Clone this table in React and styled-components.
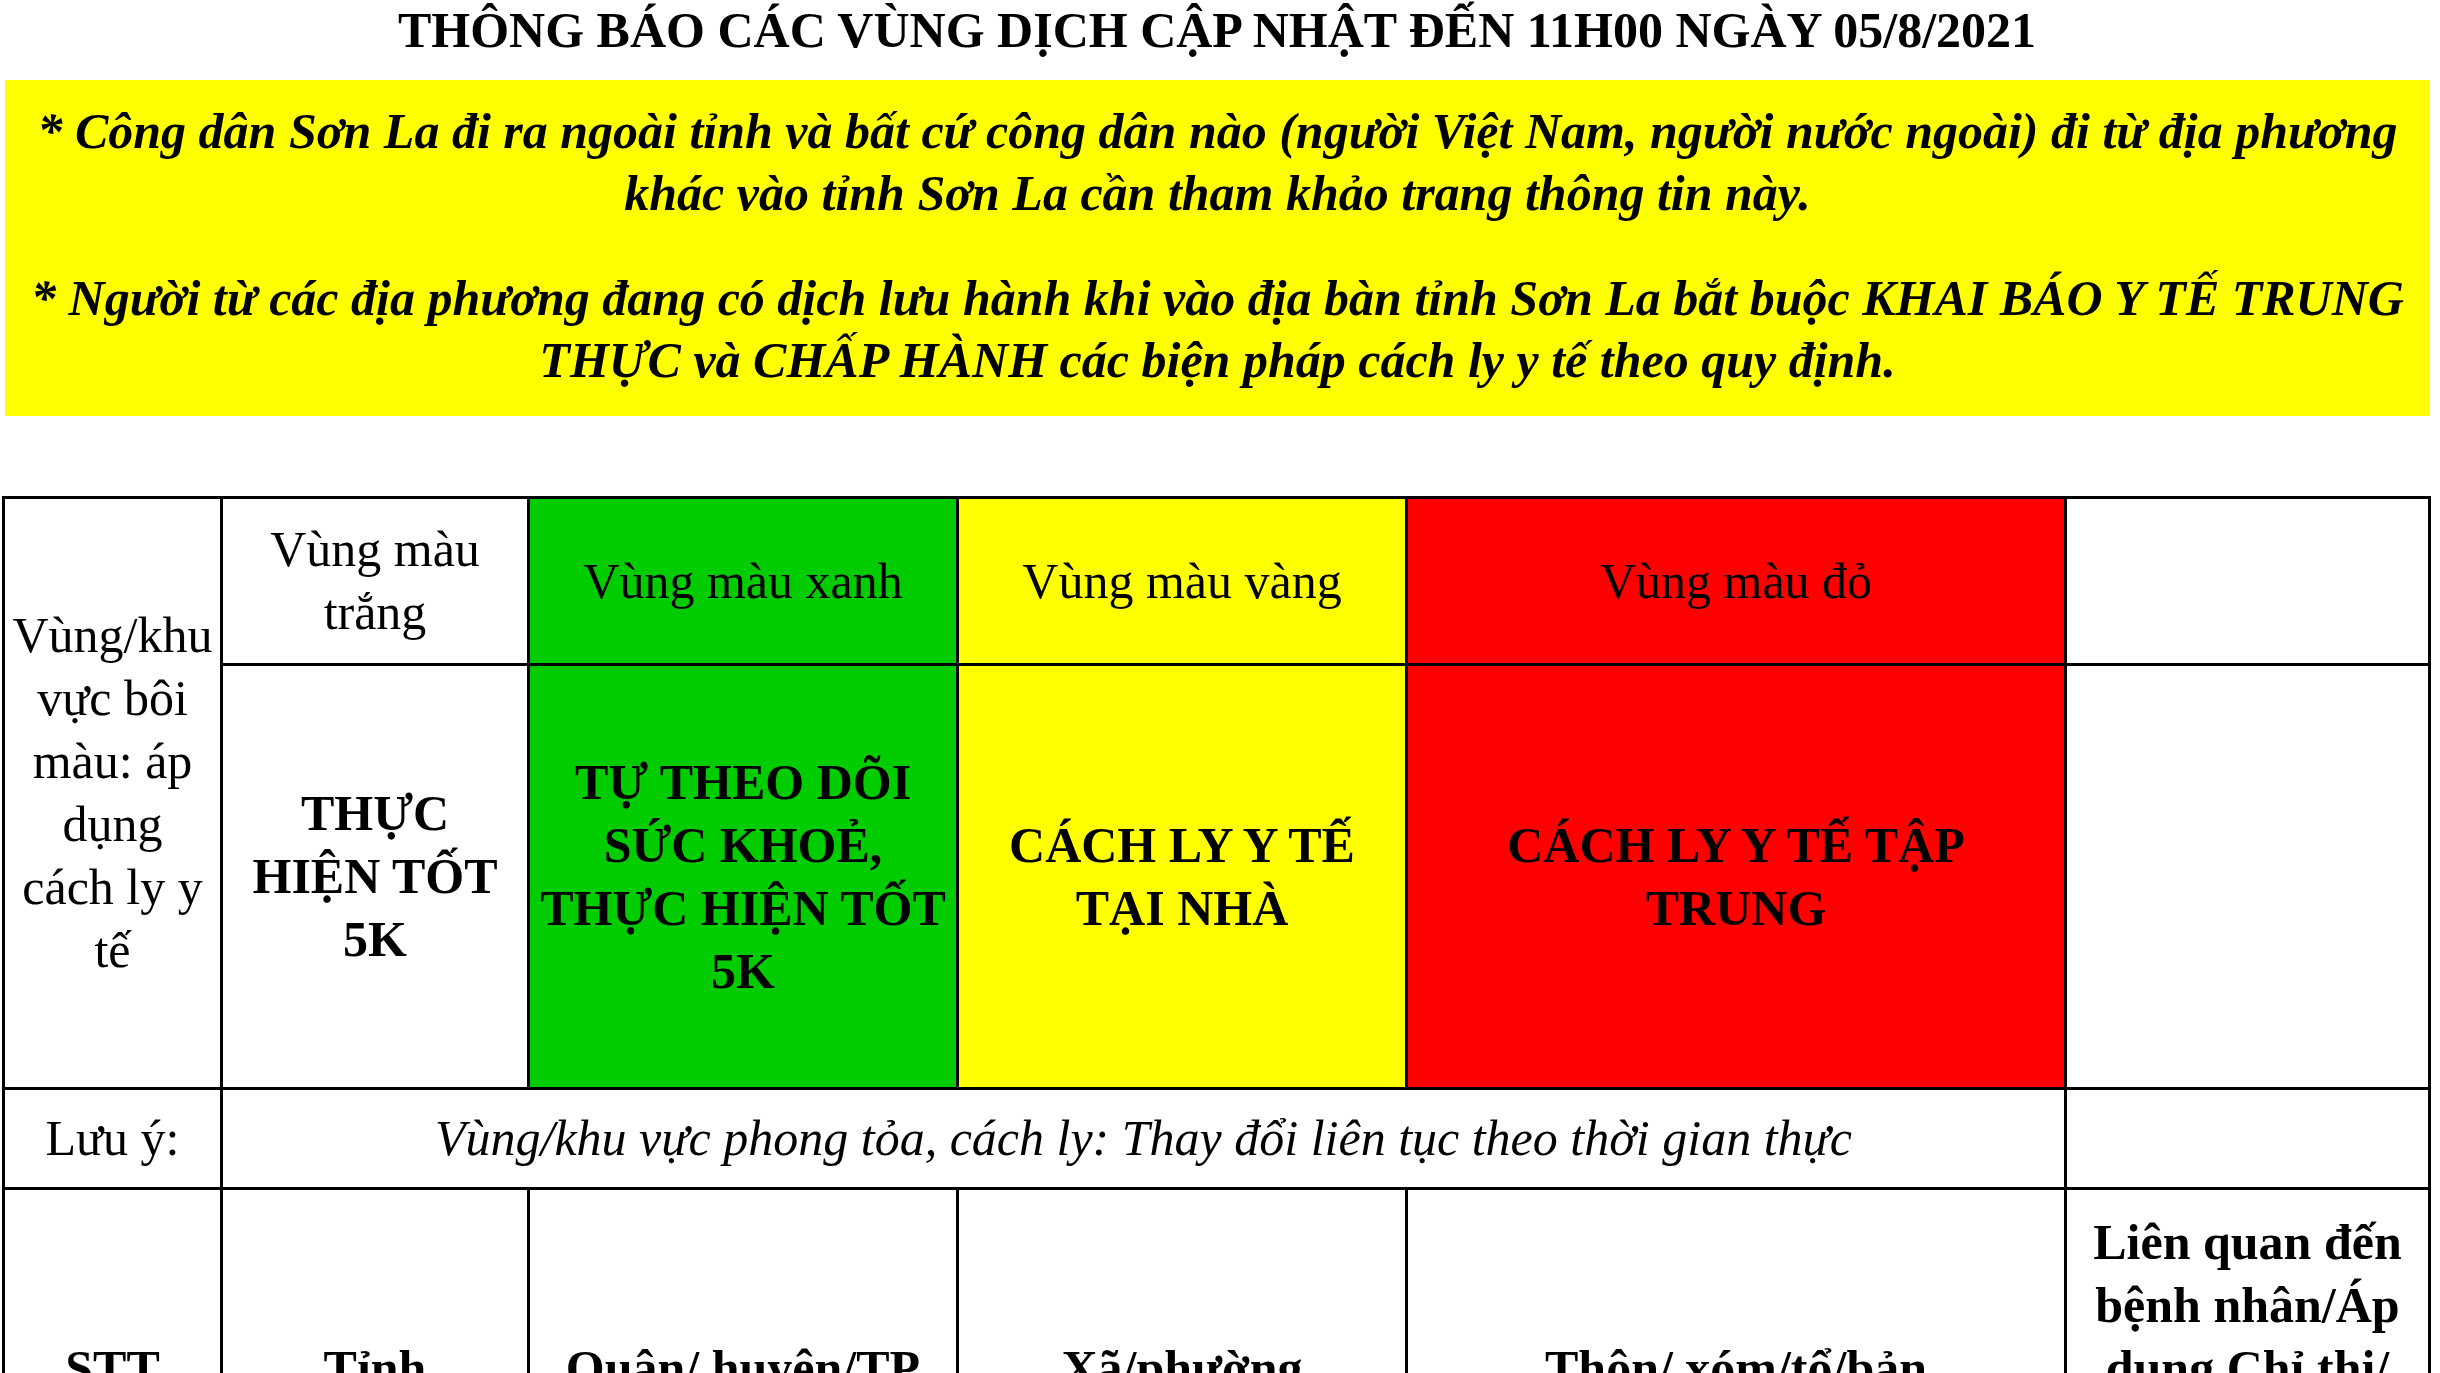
import React from 'react';
import styled, { createGlobalStyle } from 'styled-components';

const GlobalStyle = createGlobalStyle`
  body {
    margin: 0;
    background: #fff;
    color: #000;
    font-family: "Liberation Serif", "Times New Roman", serif;
  }
`;

const Page = styled.div`
  padding: 0 8px 0 2px;
`;

const Title = styled.h1`
  margin: 0 0 24px;
  padding-top: 4px;
  font-size: 50px;
  line-height: 52px;
  font-weight: 700;
  text-align: center;
`;

const Notice = styled.div`
  background: #ffff00;
  margin: 0 2px 0 3px;
  padding: 20px 6px 25px;
`;

const NoticeText = styled.p`
  margin: 0;
  font-size: 50px;
  line-height: 62px;
  font-weight: 700;
  font-style: italic;
  text-align: center;

  & + & {
    margin-top: 43px;
  }
`;

const Table = styled.table`
  width: 2426px;
  margin-top: 80px;
  border-collapse: collapse;
  table-layout: fixed;
  font-size: 50px;
  line-height: 63px;
`;

const Row = styled.tr`
  height: ${({ $h }) => $h}px;
`;

const Cell = styled.td`
  border: 3px solid #000;
  padding: 0 4px;
  text-align: center;
  vertical-align: middle;
  background: ${({ $bg }) => $bg || '#fff'};
  font-weight: ${({ $bold }) => ($bold ? 700 : 400)};
  font-style: ${({ $italic }) => ($italic ? 'italic' : 'normal')};
`;

const colWidths = [218, 307, 429, 449, 659, 364];

const GREEN = '#00cc00';
const YELLOW = '#ffff00';
const RED = '#ff0000';

const Lines = ({ items }) =>
  items.map((t, i) => (
    <React.Fragment key={i}>
      {i > 0 && <br />}
      {t}
    </React.Fragment>
  ));

const bottomHeads = ['STT', 'Tỉnh', 'Quận/ huyện/TP', 'Xã/phường', 'Thôn/ xóm/tổ/bản'];

const App = () => {
  return (
    <Page>
      <GlobalStyle />
      <Title>THÔNG BÁO CÁC VÙNG DỊCH CẬP NHẬT ĐẾN 11H00 NGÀY 05/8/2021</Title>
      <Notice>
        <NoticeText>
          * Công dân Sơn La đi ra ngoài tỉnh và bất cứ công dân nào (người Việt Nam, người nước ngoài) đi từ địa phương
          khác vào tỉnh Sơn La cần tham khảo trang thông tin này.
        </NoticeText>
        <NoticeText>
          * Người từ các địa phương đang có dịch lưu hành khi vào địa bàn tỉnh Sơn La bắt buộc KHAI BÁO Y TẾ TRUNG
          THỰC và CHẤP HÀNH các biện pháp cách ly y tế theo quy định.
        </NoticeText>
      </Notice>
      <Table>
        <colgroup>
          {colWidths.map((w, i) => (
            <col key={i} style={{ width: w }} />
          ))}
        </colgroup>
        <tbody>
          <Row $h={167}>
            <Cell rowSpan={2}>
              <Lines items={['Vùng/khu', 'vực bôi', 'màu: áp', 'dụng', 'cách ly y', 'tế']} />
            </Cell>
            <Cell>
              <Lines items={['Vùng màu', 'trắng']} />
            </Cell>
            <Cell $bg={GREEN}>Vùng màu xanh</Cell>
            <Cell $bg={YELLOW}>Vùng màu vàng</Cell>
            <Cell $bg={RED}>Vùng màu đỏ</Cell>
            <Cell />
          </Row>
          <Row $h={424}>
            <Cell $bold>
              <Lines items={['THỰC', 'HIỆN TỐT', '5K']} />
            </Cell>
            <Cell $bold $bg={GREEN}>
              <Lines items={['TỰ THEO DÕI', 'SỨC KHOẺ,', 'THỰC HIỆN TỐT', '5K']} />
            </Cell>
            <Cell $bold $bg={YELLOW}>
              <Lines items={['CÁCH LY Y TẾ', 'TẠI NHÀ']} />
            </Cell>
            <Cell $bold $bg={RED}>
              <Lines items={['CÁCH LY Y TẾ TẬP', 'TRUNG']} />
            </Cell>
            <Cell />
          </Row>
          <Row $h={100}>
            <Cell>Lưu ý:</Cell>
            <Cell colSpan={4} $italic>
              Vùng/khu vực phong tỏa, cách ly: Thay đổi liên tục theo thời gian thực
            </Cell>
            <Cell />
          </Row>
          <Row $h={360}>
            {bottomHeads.map((h) => (
              <Cell key={h} $bold>
                {h}
              </Cell>
            ))}
            <Cell $bold>
              <Lines items={['Liên quan đến', 'bệnh nhân/Áp', 'dụng Chỉ thị/', 'Quyết định', 'cách ly']} />
            </Cell>
          </Row>
        </tbody>
      </Table>
    </Page>
  );
};

export default App;
